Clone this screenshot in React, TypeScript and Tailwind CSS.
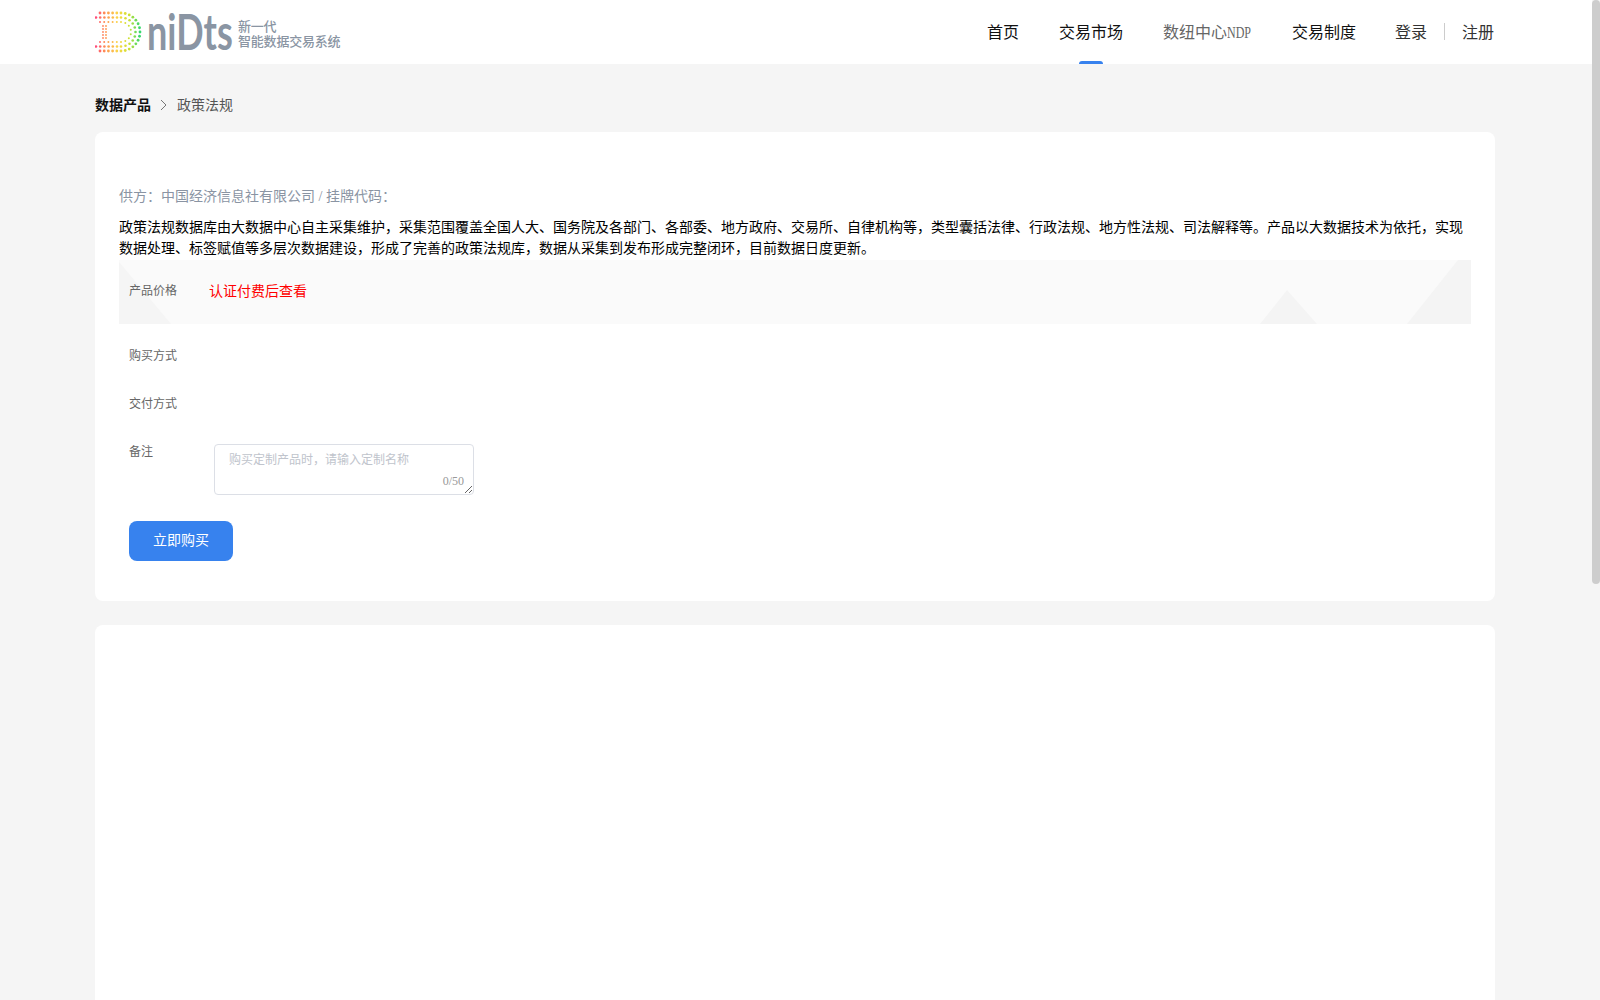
const FONT = "font-['Liberation_Serif','Noto_Sans_CJK_SC',serif]";

function dotColor(x: number): string {
  // pink on the left through yellow to green on the right
  const stops: [number, number[]][] = [
    [95, [255, 70, 125]],
    [106, [255, 150, 80]],
    [118, [250, 215, 70]],
    [129, [205, 225, 50]],
    [141, [40, 215, 115]],
  ];
  for (let i = 0; i < stops.length - 1; i++) {
    const [x0, c0] = stops[i];
    const [x1, c1] = stops[i + 1];
    if (x <= x1) {
      const t = Math.max(0, (x - x0) / (x1 - x0));
      return `rgb(${c0.map((c, j) => Math.round(c + (c1[j] - c) * t)).join(",")})`;
    }
  }
  return "rgb(40,215,115)";
}

function LogoMark() {
  const dots: { x: number; y: number; r: number }[] = [];
  const rings = [
    { R: 19, start: 100, r: 1.4 },
    { R: 14.5, start: 96, r: 1.3 },
    { R: 10, start: 100, r: 1 },
  ];
  const cx = 121;
  const cy = 32;
  for (const ring of rings) {
    for (let x = ring.start; x < cx; x += 4.2) {
      dots.push({ x, y: cy - ring.R, r: ring.r });
      dots.push({ x, y: cy + ring.R, r: ring.r });
    }
    const steps = Math.round((Math.PI * ring.R) / 4.4);
    for (let i = 0; i <= steps; i++) {
      const a = -Math.PI / 2 + (Math.PI * i) / steps;
      dots.push({ x: cx + ring.R * Math.cos(a), y: cy + ring.R * Math.sin(a), r: ring.r });
    }
  }
  for (let y = 26; y <= 38; y += 3) {
    dots.push({ x: 103, y, r: 0.9 });
    dots.push({ x: 106, y, r: 0.9 });
  }
  return (
    <svg width="48" height="44" viewBox="95 10 48 44" className="block shrink-0">
      {dots.map((d, i) => (
        <circle key={i} cx={d.x} cy={d.y} r={d.r} fill={dotColor(d.x)} />
      ))}
    </svg>
  );
}

function Logo() {
  return (
    <div className="flex items-center">
      <LogoMark />
      <span className="block ml-[4px] mt-[10px] w-[87px] shrink-0 whitespace-nowrap origin-bottom scale-y-[1.36] font-['Lato',sans-serif] text-[36px] leading-[36px] font-bold text-[#8a95a3]">
        niDts
      </span>
      <div className="ml-[4px] mt-[4px] text-[13px] leading-[15px] tracking-[-0.2px] font-['Liberation_Sans','Noto_Sans_CJK_SC',sans-serif] font-medium text-[#8a95a3]">
        <div>新一代</div>
        <div>智能数据交易系统</div>
      </div>
    </div>
  );
}

function Header() {
  return (
    <header className="h-16 bg-white shrink-0">
      <div className="w-[1400px] h-full ml-[95px] flex items-center justify-between">
        <Logo />
        <nav className="flex h-full items-center pt-px pr-px text-[16px] text-[#111]">
          <a className="h-full flex items-center mr-10">首页</a>
          <a className="relative h-full flex items-center mr-10">
            交易市场
            <span className="absolute bottom-0 left-1/2 -translate-x-1/2 w-6 h-[3px] rounded-t-sm bg-[#3782ee]" />
          </a>
          <a className="h-full flex items-center mr-10 text-[#666]">
            数纽中心
            <span className="inline-block w-[25px] origin-left scale-x-[0.75]">NDP</span>
          </a>
          <a className="h-full flex items-center mr-[39px]">交易制度</a>
          <a className="text-[#333]">登录</a>
          <span className="w-px h-[17px] bg-[#ccc] mx-[17px] -mt-[3px]" />
          <a className="text-[#333]">注册</a>
        </nav>
      </div>
    </header>
  );
}

function Breadcrumb() {
  return (
    <div className="h-[68px] pt-[14px] flex items-center text-[14px]">
      <span className="font-bold text-[#111]">数据产品</span>
      <svg width="10" height="12" viewBox="0 0 10 12" className="mx-[8px] text-[#777]">
        <path d="M2 1l5 5-5 5" fill="none" stroke="currentColor" strokeWidth="1" />
      </svg>
      <span className="text-[#555]">政策法规</span>
    </div>
  );
}

function PriceBand() {
  return (
    <div className="relative mt-px h-16 bg-[#fafafa] flex items-center px-[10px] pb-[2px] overflow-hidden">
      <svg className="absolute inset-0 w-full h-full" viewBox="0 0 1352 64" preserveAspectRatio="none">
        <path d="M0 2L52 64H0Z" fill="#f5f5f5" />
        <path d="M1141 64L1168 30L1198 64Z" fill="#f4f4f4" />
        <path d="M1288 64L1339 0H1352V64Z" fill="#f4f4f4" />
      </svg>
      <span className="relative w-[80px] text-[12px] text-[#666]">产品价格</span>
      <span className="relative text-[14px] text-[#ff0000]">认证付费后查看</span>
    </div>
  );
}

function FormRows() {
  return (
    <div className="px-[10px]">
      <div className="h-12 pt-[24px] text-[12px] leading-[16px] text-[#666]">购买方式</div>
      <div className="h-12 pt-[24px] text-[12px] leading-[16px] text-[#666]">交付方式</div>
      <div className="flex mt-[24px]">
        <label className="w-[85px] text-[12px] leading-[16px] text-[#666]">备注</label>
        <div className="relative">
          <textarea
            placeholder="购买定制产品时，请输入定制名称"
            className={`block w-[260px] h-[51px] px-[14px] py-[6px] text-[12px] leading-[18px] border border-[#dcdfe6] rounded-[4px] outline-none resize-y placeholder:text-[#c0c4cc] ${FONT}`}
          />
          <span className="absolute right-[10px] bottom-[6px] text-[12px] leading-[16px] text-[#999]">0/50</span>
        </div>
      </div>
      <button className="mt-[26px] pb-[2px] block w-[104px] h-10 rounded-lg bg-[#3782ee] text-[14px] text-white">
        立即购买
      </button>
    </div>
  );
}

export default function App() {
  return (
    <div className={`flex h-screen overflow-hidden bg-[#f5f5f5] ${FONT}`}>
      <div className="flex-1 min-w-0">
        <Header />
        <main className="w-[1400px] ml-[95px] pb-6">
          <Breadcrumb />
          <section className="h-[469px] bg-white rounded-lg px-6 pt-[54px]">
            <p className="text-[14px] leading-[21px] text-[#8a94a3]">
              供方：中国经济信息社有限公司 / 挂牌代码：
            </p>
            <p className="mt-[10px] text-[14px] leading-[21px] text-black">
              政策法规数据库由大数据中心自主采集维护，采集范围覆盖全国人大、国务院及各部门、各部委、地方政府、交易所、自律机构等，类型囊括法律、行政法规、地方性法规、司法解释等。产品以大数据技术为依托，实现数据处理、标签赋值等多层次数据建设，形成了完善的政策法规库，数据从采集到发布形成完整闭环，目前数据日度更新。
            </p>
            <PriceBand />
            <FormRows />
          </section>
          <section className="mt-6 h-[1064px] bg-white rounded-lg" />
        </main>
      </div>
      {/* page scrollbar */}
      <div className="w-2 shrink-0 bg-[#f5f5f5]">
        <div className="h-[584px] rounded-full bg-[#cdcdcd]" />
      </div>
    </div>
  );
}
